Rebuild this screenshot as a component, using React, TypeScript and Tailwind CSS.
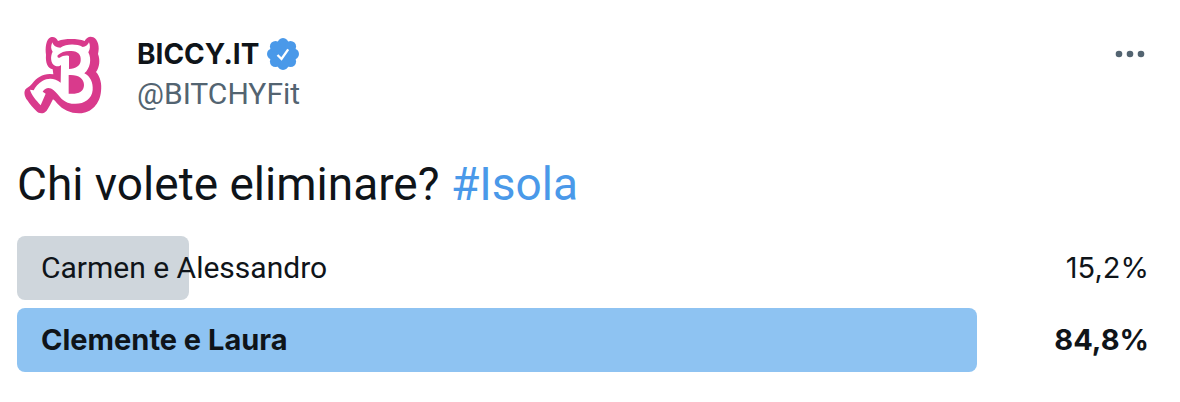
const options = [
  { label: "Carmen e Alessandro", value: 15.2, text: "15,2%", winner: false },
  { label: "Clemente e Laura", value: 84.8, text: "84,8%", winner: true },
];

function Logo() {
  return (
    <svg viewBox="0 0 288 288" className="size-24" role="img" aria-label="BICCY.IT">
      <path
        fill="#d93a8c"
        d="M101 28 C110 25 118 29 123 39 C145 31 180 31 203 39 C208 28 219 23 229 28 C243 34 249 58 243 78 C250 96 248 118 237 132 C250 146 255 168 252 190 C249 228 222 257 186 256 C160 256 138 246 120 226 C116 220 112 216 108 214 C102 226 95 240 89 248 C81 258 66 258 58 249 C48 240 39 229 31 217 C22 205 19 190 27 182 C36 176 42 172 47 165 C58 150 76 138 98 138 L109 139 L107 124 C92 120 85 105 87 80 C84 60 87 34 101 28 Z"
      />
      <path
        fill="#fff"
        d="M106 43 C101 54 101 63 107 71 C99 85 101 107 114 113 C121 116 128 115 132 111 L131 164 C114 150 93 149 76 159 C64 166 55 176 50 187 L39 185 C43 201 58 217 71 232 L86 197 L77 191 C86 178 98 177 110 187 C126 201 132 217 152 224 C188 235 224 220 227 186 C229 164 220 145 202 136 C219 123 225 93 214 73 C220 63 220 53 216 43 C213 51 206 57 197 57 C179 47 148 47 130 59 C118 59 109 53 106 43 Z"
      />
      <path
        fill="#d93a8c"
        d="M122 82 C132 72 146 68 163 69 C184 70 193 80 191 99 C189 113 178 122 156 123 L156 84 C146 81 137 84 128 89 C123 91 120 88 122 82 Z M155 141 C184 139 201 151 201 171 C201 192 181 200 155 197 Z"
      />
    </svg>
  );
}

function Verified() {
  return (
    <svg viewBox="0 0 32 34" className="h-[34px] w-8" role="img" aria-label="Verified account">
      <g fill="#4a99e9">
        <circle cx="16" cy="17" r="12" />
        <circle cx="16" cy="6.6" r="5.6" />
        <circle cx="23.5" cy="9.5" r="5.6" />
        <circle cx="26.4" cy="17" r="5.6" />
        <circle cx="23.5" cy="24.5" r="5.6" />
        <circle cx="16" cy="27.4" r="5.6" />
        <circle cx="8.5" cy="24.5" r="5.6" />
        <circle cx="5.6" cy="17" r="5.6" />
        <circle cx="8.5" cy="9.5" r="5.6" />
      </g>
      <path d="M10.5 18 L14.5 22 L21.2 12.4" fill="none" stroke="#fff" strokeWidth="2.3" />
    </svg>
  );
}

export default function App() {
  return (
    <article className="bg-white pt-7 pr-[31px] pb-[30px] pl-[17px] font-['Roboto',sans-serif] text-[#0f1419]">
      <header className="flex items-start gap-6">
        <Logo />
        <div className="min-w-0 flex-1 pt-1.5 text-[30px] leading-10">
          <div className="flex items-center gap-2">
            <a href="#profile" className="font-['Inter',sans-serif] text-[28px] font-bold">BICCY.IT</a>
            <Verified />
          </div>
          <a href="#profile" className="block text-[#536471]">@BITCHYFit</a>
        </div>
        <button type="button" aria-label="More" className="mt-[22px] mr-1">
          <svg viewBox="0 0 30 8" className="h-2 w-[30px]" fill="#536471">
            <circle cx="4" cy="4" r="3.3" />
            <circle cx="15" cy="4" r="3.3" />
            <circle cx="26" cy="4" r="3.3" />
          </svg>
        </button>
      </header>
      <p className="mt-8 text-[46px] leading-[56px]">
        Chi volete eliminare? <a href="#Isola" className="text-[#4a99e9]">#Isola</a>
      </p>
      <ul className="mt-6 flex flex-col gap-2 leading-10">
        {options.map((o) => (
          <li
            key={o.label}
            className={
              o.winner
                ? "relative flex h-16 items-center justify-between pl-6 font-['Inter',sans-serif] text-[29px] font-bold"
                : "relative flex h-16 items-center justify-between pl-6 text-[30px]"
            }
          >
            <div
              className={o.winner ? "absolute inset-y-0 left-0 rounded-lg bg-[#8ec3f2]" : "absolute inset-y-0 left-0 rounded-lg bg-[#cfd6dc]"}
              style={{ width: `${o.value}%` }}
            />
            <span className="relative">{o.label}</span>
            <span className={o.winner ? "relative" : "relative font-['Inter',sans-serif] text-[29px]"}>{o.text}</span>
          </li>
        ))}
      </ul>
    </article>
  );
}
